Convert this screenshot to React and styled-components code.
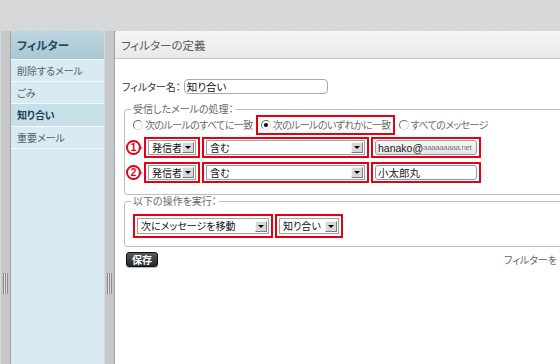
import React from "react";
import styled, { createGlobalStyle } from "styled-components";

const GlobalStyle = createGlobalStyle`
	html, body {
		margin: 0;
		padding: 0;
	}
	body {
		width: 560px;
		height: 364px;
		overflow: hidden;
		font-family: "Noto Sans CJK JP", "Liberation Sans", sans-serif;
		font-size: 10px;
		line-height: 12px;
		font-feature-settings: "palt";
		background-color: #d5d6d7;
		background-image: repeating-linear-gradient(
			45deg,
			rgba(255, 255, 255, 0.12) 0 1px,
			transparent 1px 3px
		);
	}
`;

const red = "#e60012";

const Page = styled.div`
	display: flex;
	height: 364px;
	padding-top: 31px;
	box-sizing: border-box;
`;

const Splitter = styled.div`
	width: 11px;
	flex: none;
	display: flex;
	justify-content: center;
	padding-top: 242px;
	background: #c6c7c8;
	border-left: 1px solid #dcdcdc;
	border-right: 1px solid #a3a3a3;
	box-sizing: border-box;
`;

const Grip = styled.div`
	width: 5px;
	height: 21px;
	background: repeating-linear-gradient(90deg, #8a8a8a 0 1px, #e2e2e2 1px 2px);
`;

const Sidebar = styled.nav`
	width: 93px;
	flex: none;
	background: #d9ebf2;
	border-radius: 4px 4px 0 0;
	overflow: hidden;
`;

const SideHeader = styled.div`
	height: 28px;
	display: flex;
	align-items: center;
	padding-left: 6px;
	background: linear-gradient(#bcd6e0, #a9c7d3);
	border-bottom: 1px solid #eef6f9;
	color: #1e4b5e;
	font-size: 11.5px;
	font-weight: bold;
`;

const SideItem = styled.div`
	height: ${(p) => (p.$active ? 22 : 21)}px;
	display: flex;
	align-items: center;
	padding-left: 6px;
	border-bottom: 1px solid #f2f8fb;
	background: ${(p) => (p.$active ? "#c7dfe9" : "transparent")};
	color: ${(p) => (p.$active ? "#1b3d4c" : "#51606a")};
	font-weight: ${(p) => (p.$active ? "bold" : "normal")};
`;

const Main = styled.main`
	flex: 1;
	min-width: 0;
	background: #fff;
	border-radius: 4px 0 0 0;
	overflow: hidden;
`;

const MainHeader = styled.div`
	height: 27px;
	display: flex;
	align-items: center;
	padding-left: 6px;
	background: linear-gradient(#f6f6f6, #e9e9e9);
	border-bottom: 1px solid #c9c9c9;
	color: #5a5a5a;
	font-size: 11.5px;
`;

const FormBody = styled.div`
	padding: 20px 0 0 7px;
`;

const NameRow = styled.div`
	display: flex;
	align-items: center;
	gap: 3px;
	color: #333;
`;

const NameInput = styled.div`
	width: 144px;
	height: 15px;
	box-sizing: border-box;
	display: flex;
	align-items: center;
	padding: 0 2px;
	border: 1px solid #a9a9a9;
	border-radius: 4px;
	color: #111;
	font-size: 10.5px;
`;

const Group = styled.fieldset`
	width: 470px;
	min-width: 0;
	margin: ${(p) => p.$mt || 0}px 0 0 2px;
	padding: ${(p) => p.$pad};
	border: 1px solid #bdbdbd;
	border-radius: 3px;
	box-sizing: border-box;
`;

const Legend = styled.legend`
	margin-left: 6px;
	padding: 0 2px;
	color: #666;
	line-height: 12px;
`;

const RadioRow = styled.div`
	display: flex;
	align-items: center;
	height: 20px;
	margin-left: 8px;
	color: #6a6a6a;
	letter-spacing: -0.6px;
`;

const RadioOption = styled.label`
	display: inline-flex;
	align-items: center;
	gap: 2px;
	margin-left: ${(p) => p.$ml || 0}px;
`;

const RadioDot = styled.span`
	position: relative;
	width: 10px;
	height: 10px;
	box-sizing: border-box;
	border-radius: 50%;
	border: 1px solid;
	border-color: #6f6f6f #dadada #dadada #6f6f6f;
	background: #fff;

	&::after {
		content: "";
		display: ${(p) => (p.$checked ? "block" : "none")};
		position: absolute;
		left: 2px;
		top: 2px;
		width: 4px;
		height: 4px;
		border-radius: 50%;
		background: #000;
	}
`;

const Highlight = styled.div`
	display: inline-flex;
	align-items: center;
	gap: 2px;
	border: 2px solid ${red};
	padding: ${(p) => p.$pad || "1px 2px"};
	margin-left: ${(p) => p.$ml || 0}px;
`;

const RuleRow = styled.div`
	display: flex;
	align-items: center;
	gap: 2px;
	margin-top: ${(p) => p.$mt}px;
	margin-left: 1px;
`;

const Num = styled.span`
	position: relative;
	width: 15px;
	height: 15px;
	box-sizing: border-box;
	display: inline-flex;
	align-items: center;
	justify-content: center;
	border: 2px solid ${red};
	border-radius: 50%;
	color: ${red};
	font-family: "Liberation Sans", sans-serif;
	font-size: 10px;
	font-weight: bold;
	margin-right: 1px;

	&::after {
		content: "";
		position: absolute;
		right: -4px;
		top: 4.5px;
		border-left: 3px solid ${red};
		border-top: 1.5px solid transparent;
		border-bottom: 1.5px solid transparent;
	}
`;

const Select = styled.div`
	width: ${(p) => p.$w}px;
	height: ${(p) => p.$h || 15}px;
	box-sizing: border-box;
	display: flex;
	align-items: center;
	padding-left: 3px;
	border: 1px solid #a0a0a0;
	background: #fff;
	color: #111;

	span {
		flex: 1;
	}
`;

const DropButton = styled.span`
	flex: none !important;
	width: 12px;
	height: 11px;
	margin-right: 1px;
	display: flex;
	align-items: center;
	justify-content: center;
	box-sizing: border-box;
	border: 1px solid;
	border-color: #f4f4f4 #7d7d7d #7d7d7d #f4f4f4;
	background: #d8d8d8;

	&::after {
		content: "";
		border-top: 3px solid #000;
		border-left: 3px solid transparent;
		border-right: 3px solid transparent;
	}
`;

const TextField = styled.div`
	width: ${(p) => p.$w}px;
	height: 15px;
	box-sizing: border-box;
	display: flex;
	align-items: center;
	padding: 0 2px;
	border: 1px solid ${(p) => (p.$focused ? "#7b9ebd" : "#9a9a9a")};
	border-radius: 3px;
	background: ${(p) => (p.$focused ? "#fff" : "linear-gradient(#f7f7f7, #e6e6e6)")};
	color: #1a1a1a;
	font-family: "Liberation Sans", "Noto Sans CJK JP", sans-serif;
	font-size: 10.5px;
	white-space: nowrap;
	overflow: hidden;
`;

const Blurred = styled.span`
	color: #777;
	filter: blur(0.6px);
	font-size: 8px;
	letter-spacing: -0.4px;
`;

const ActionRow = styled.div`
	display: flex;
	align-items: center;
	gap: 2px;
	margin-left: 8px;
`;

const SaveRow = styled.div`
	display: flex;
	align-items: center;
	justify-content: space-between;
	margin: 5px 3px 0 4px;
`;

const SaveButton = styled.button`
	height: 15px;
	padding: 0 5px;
	border: 1px solid #111;
	border-radius: 3px;
	background: linear-gradient(#5a5a5a, #262626);
	color: #fff;
	font-family: inherit;
	font-size: 10px;
	font-weight: bold;
	line-height: 12px;
	box-shadow: 0 1px 1px rgba(0, 0, 0, 0.3);
`;

const Hint = styled.span`
	color: #666;
	white-space: nowrap;
`;

const Dropdown = ({ w, h, children }) => (
	<Select $w={w} $h={h}>
		<span>{children}</span>
		<DropButton />
	</Select>
);

const Rule = ({ n, mt, value }) => (
	<RuleRow $mt={mt}>
		<Num>{n}</Num>
		<Highlight>
			<Dropdown w={48}>発信者</Dropdown>
		</Highlight>
		<Highlight>
			<Dropdown w={159}>含む</Dropdown>
		</Highlight>
		<Highlight>{value}</Highlight>
	</RuleRow>
);

const menu = ["削除するメール", "ごみ", "知り合い", "重要メール"];

export default function App() {
	return (
		<>
			<GlobalStyle />
			<Page>
				<Splitter>
					<Grip />
				</Splitter>
				<Sidebar>
					<SideHeader>フィルター</SideHeader>
					{menu.map((m) => (
						<SideItem key={m} $active={m === "知り合い"}>
							{m}
						</SideItem>
					))}
				</Sidebar>
				<Splitter>
					<Grip />
				</Splitter>
				<Main>
					<MainHeader>フィルターの定義</MainHeader>
					<FormBody>
						<NameRow>
							<span>フィルター名：</span>
							<NameInput>知り合い</NameInput>
						</NameRow>

						<Group $mt={9} $pad="0 0 11px 0">
							<Legend>受信したメールの処理：</Legend>
							<RadioRow>
								<RadioOption>
									<RadioDot />
									次のルールのすべてに一致
								</RadioOption>
								<Highlight $pad="2px 2px 2px 3px" $ml={3}>
									<RadioOption>
										<RadioDot $checked />
										次のルールのいずれかに一致
									</RadioOption>
								</Highlight>
								<RadioOption $ml={4}>
									<RadioDot />
									すべてのメッセージ
								</RadioOption>
							</RadioRow>
							<Rule
								n="1"
								mt={2}
								value={
									<TextField $w={102}>
										hanako@<Blurred>aaaaaaaaa.net</Blurred>
									</TextField>
								}
							/>
							<Rule
								n="2"
								mt={4}
								value={
									<TextField $w={102} $focused>
										小太郎丸
									</TextField>
								}
							/>
						</Group>

						<Group $pad="7px 0 8px 0">
							<Legend>以下の操作を実行：</Legend>
							<ActionRow>
								<Highlight $pad="2px">
									<Dropdown w={132} h={16}>
										次にメッセージを移動
									</Dropdown>
								</Highlight>
								<Highlight $pad="2px">
									<Dropdown w={60} h={16}>
										知り合い
									</Dropdown>
								</Highlight>
							</ActionRow>
						</Group>

						<SaveRow>
							<SaveButton>保存</SaveButton>
							<Hint>フィルターを</Hint>
						</SaveRow>
					</FormBody>
				</Main>
			</Page>
		</>
	);
}
